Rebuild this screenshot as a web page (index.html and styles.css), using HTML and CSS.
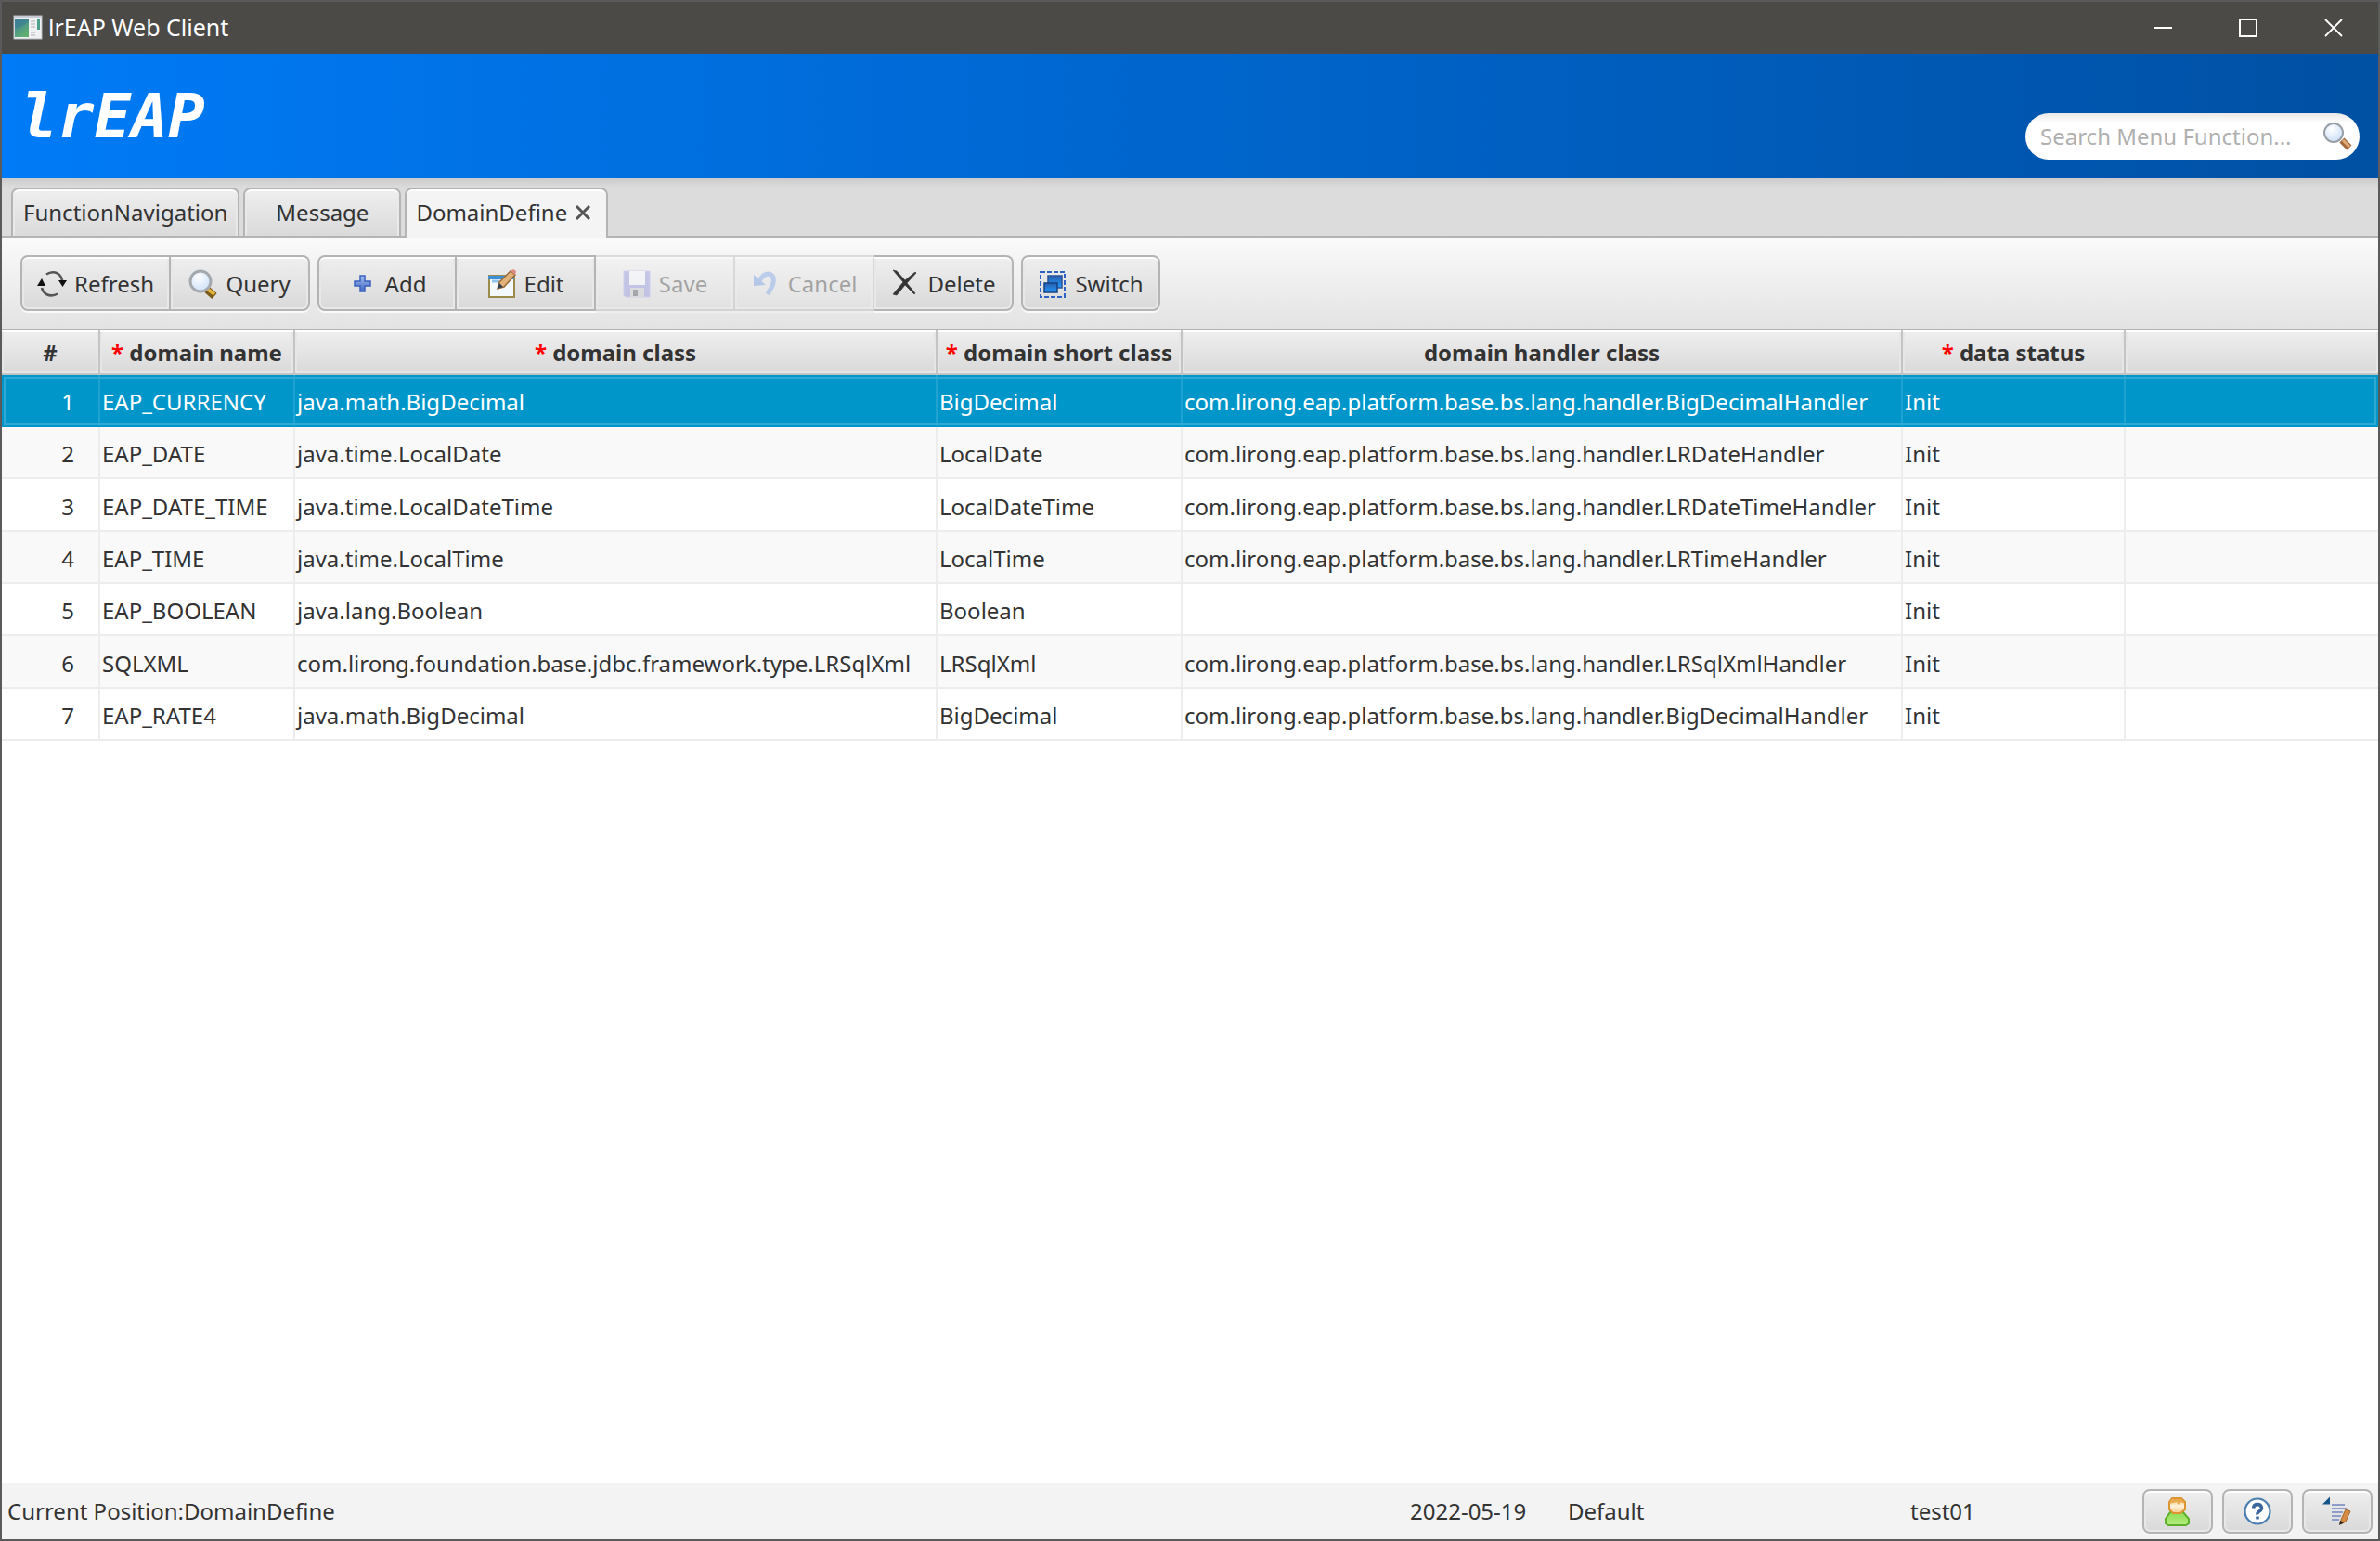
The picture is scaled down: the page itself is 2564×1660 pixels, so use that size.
FILE: index.html
```html
<!DOCTYPE html>
<html lang="en">
<head>
<meta charset="utf-8">
<title>lrEAP Web Client</title>
<link rel="stylesheet" href="styles.css">
</head>
<body>
<svg class="defs" width="0" height="0" aria-hidden="true">
  <defs>
    <radialGradient id="glass" cx="0.4" cy="0.3" r="0.8"><stop offset="0" stop-color="#ffffff"/><stop offset="1" stop-color="#c6dcf8"/></radialGradient>
    <linearGradient id="plus" x2="0" y2="1"><stop offset="0" stop-color="#a5c0f0"/><stop offset="1" stop-color="#3f66c4"/></linearGradient>
    <linearGradient id="photo" x2="0.6" y2="1"><stop offset="0" stop-color="#3f7f9f"/><stop offset="1" stop-color="#5fb070"/></linearGradient>
    <linearGradient id="face" x2="0" y2="1"><stop offset="0" stop-color="#f3b65b"/><stop offset="0.5" stop-color="#fff3dd"/><stop offset="1" stop-color="#fbc987"/></linearGradient>
    <linearGradient id="shirt" x2="0" y2="1"><stop offset="0" stop-color="#8fdc52"/><stop offset="1" stop-color="#b4ee80"/></linearGradient>
    <linearGradient id="pane" x2="0" y2="1"><stop offset="0" stop-color="#2a5dac"/><stop offset="1" stop-color="#1f9bff"/></linearGradient>
  </defs>
</svg>
<div class="window">
  <header class="titlebar">
    <svg class="app-icon" width="32" height="28" viewBox="0 0 32 28"><rect x="1" y="1" width="30" height="25" fill="#f0f1f2" stroke="#b9bcc2"/><path d="M1 2h30" stroke="#c9ccd6" stroke-width="2"/><rect x="2" y="5" width="15" height="19" fill="url(#photo)"/><path d="M2 15q7-1 15-8v-2H2z" fill="#3b7b93" opacity=".6"/><path d="M19 7h5M19 10h5M19 13h5M19 19h5M19 22h5" stroke="#c3c6c9" stroke-width="1.5"/><rect x="26" y="5" width="3" height="11" fill="#4f9f8d"/></svg>
    <h1 class="title">lrEAP Web Client</h1>
    <div class="window-buttons">
      <button aria-label="Minimize"><svg width="20" height="20" viewBox="0 0 20 20"><path d="M0 10h20" stroke="#fff" stroke-width="2"/></svg></button>
      <button aria-label="Maximize"><svg width="20" height="20" viewBox="0 0 20 20"><path d="M1 1h18v18H1z" fill="none" stroke="#fff" stroke-width="2"/></svg></button>
      <button aria-label="Close"><svg width="20" height="20" viewBox="0 0 20 20"><path d="M1 1l18 18M19 1L1 19" stroke="#fff" stroke-width="1.8"/></svg></button>
    </div>
  </header>

  <div class="banner">
    <div class="logo">lrEAP</div>
    <form class="search">
      <input type="text" aria-label="Search menu function" placeholder="Search Menu Function...">
      <svg width="32" height="32" viewBox="0 0 32 32"><path d="M20 21l8 8" stroke="#bdbdbd" stroke-width="5"/><path d="M21 20l8 8" stroke="#a5693c" stroke-width="7"/><path d="M22 20l7 7" stroke="#e0ab78" stroke-width="3"/><circle cx="12" cy="12" r="10" fill="url(#glass)" stroke="#9ba0a6" stroke-width="2"/></svg>
    </form>
  </div>

  <nav class="tabs">
    <button class="tab">FunctionNavigation</button>
    <button class="tab">Message</button>
    <button class="tab active">DomainDefine<svg width="18" height="18" viewBox="0 0 18 18"><path d="M2 2l14 14M16 2L2 16" stroke="#555" stroke-width="3"/></svg></button>
  </nav>

  <div class="toolbar">
    <div class="group">
      <button><svg width="32" height="32" viewBox="0 0 32 32"><path d="M10 5.500Q16 1.500 22 4.500Q26 7 27 12M22 26.500Q16 30 10 27Q6 24.500 5 20" fill="none" stroke="#555" stroke-width="2.600"/><path d="M23 12h9l-4.500 7z" fill="#111"/><path d="M0 18h9L5 10z" fill="#111"/></svg>Refresh</button>
      <button><svg width="32" height="32" viewBox="0 0 32 32"><path d="M20 22l8 7" stroke="#7a5a18" stroke-width="8"/><path d="M20 21l8 6" stroke="#e2b23b" stroke-width="4"/><circle cx="13" cy="13" r="11" fill="url(#glass)" stroke="#a4a9ae" stroke-width="3"/></svg>Query</button>
    </div>
    <div class="group">
      <button><svg width="32" height="32" viewBox="0 0 32 32"><path d="M13 7h5v6h6v5h-6v6h-5v-6H7v-5h6z" fill="url(#plus)" stroke="#3a62bd" stroke-width="1.500"/></svg>Add</button>
      <button><svg width="32" height="32" viewBox="0 0 32 32"><rect x="2" y="7" width="27" height="23" fill="#f3f9fd" stroke="#9c8a4b" stroke-width="2"/><path d="M1 7h28v4H1z" fill="#3d8fd6"/><path d="M5 13h8" stroke="#8fc3ea" stroke-width="3"/><path d="M11 21l2-7L25 2l5 4-12 13z" fill="#e2b27b" stroke="#9a6b3c" stroke-width="1.500"/><path d="M25 2l5 4 1-4-3-2z" fill="#e08a80"/><path d="M11 21l2-6 4 4z" fill="#2e4150"/></svg>Edit</button>
      <button disabled><svg width="32" height="32" viewBox="0 0 32 32"><path d="M2 2h28v28H4l-2-2z" fill="#8585d8" stroke="#a0a0ea" stroke-width="1"/><rect x="8" y="2" width="17" height="15" fill="#f7f9ff"/><rect x="9" y="20" width="15" height="10" fill="#bfc3c9"/><rect x="12" y="22" width="5" height="7" fill="#3d424a"/></svg>Save</button>
      <button disabled><svg width="32" height="32" viewBox="0 0 32 32"><path d="M9 13Q13 5 19 5Q27 7 23 18L18 27" fill="none" stroke="#6f9ae6" stroke-width="5"/><path d="M3 6v12l13-1z" fill="#5f8fe3"/></svg>Cancel</button>
      <button><svg width="32" height="32" viewBox="0 0 32 32"><path d="M2 1l4 1 9 10L26 3l1 1-10 11 9 11-1 1-10-10-9 11-4-1 11-13z" fill="#333" stroke="#444" stroke-width=".8"/></svg>Delete</button>
    </div>
    <div class="group">
      <button><svg width="32" height="32" viewBox="0 0 32 32"><rect x="3" y="3" width="26" height="27" fill="none" stroke="#2b62c4" stroke-width="2" stroke-dasharray="5 2"/><rect x="11" y="7" width="15" height="13" fill="url(#pane)" stroke="#2a5596" stroke-width="1.500"/><rect x="7" y="15" width="14" height="10" fill="url(#pane)" stroke="#17407f" stroke-width="1.500"/></svg>Switch</button>
    </div>
  </div>

  <main class="content">
    <table class="grid">
      <colgroup><col class="c-num"><col class="c-name"><col class="c-class"><col class="c-short"><col class="c-handler"><col class="c-status"><col></colgroup>
      <thead>
        <tr><th>#</th><th><i>*</i> domain name</th><th><i>*</i> domain class</th><th><i>*</i> domain short class</th><th>domain handler class</th><th><i>*</i> data status</th><th></th></tr>
      </thead>
      <tbody>
        <tr class="selected"><td>1</td><td>EAP_CURRENCY</td><td>java.math.BigDecimal</td><td>BigDecimal</td><td>com.lirong.eap.platform.base.bs.lang.handler.BigDecimalHandler</td><td>Init</td><td></td></tr>
        <tr><td>2</td><td>EAP_DATE</td><td>java.time.LocalDate</td><td>LocalDate</td><td>com.lirong.eap.platform.base.bs.lang.handler.LRDateHandler</td><td>Init</td><td></td></tr>
        <tr><td>3</td><td>EAP_DATE_TIME</td><td>java.time.LocalDateTime</td><td>LocalDateTime</td><td>com.lirong.eap.platform.base.bs.lang.handler.LRDateTimeHandler</td><td>Init</td><td></td></tr>
        <tr><td>4</td><td>EAP_TIME</td><td>java.time.LocalTime</td><td>LocalTime</td><td>com.lirong.eap.platform.base.bs.lang.handler.LRTimeHandler</td><td>Init</td><td></td></tr>
        <tr><td>5</td><td>EAP_BOOLEAN</td><td>java.lang.Boolean</td><td>Boolean</td><td></td><td>Init</td><td></td></tr>
        <tr><td>6</td><td>SQLXML</td><td>com.lirong.foundation.base.jdbc.framework.type.LRSqlXml</td><td>LRSqlXml</td><td>com.lirong.eap.platform.base.bs.lang.handler.LRSqlXmlHandler</td><td>Init</td><td></td></tr>
        <tr><td>7</td><td>EAP_RATE4</td><td>java.math.BigDecimal</td><td>BigDecimal</td><td>com.lirong.eap.platform.base.bs.lang.handler.BigDecimalHandler</td><td>Init</td><td></td></tr>
      </tbody>
    </table>
  </main>

  <footer class="statusbar">
    <span class="position">Current Position:DomainDefine</span>
    <span class="date">2022-05-19</span>
    <span class="org">Default</span>
    <span class="user">test01</span>
    <div class="status-buttons">
      <button aria-label="User"><svg width="32" height="32" viewBox="0 0 32 32"><path d="M3 29v-5l5-7h14l6 7v5l-3 2H6z" fill="url(#shirt)" stroke="#5cb02c" stroke-width="2"/><path d="M10 2h10l4 4v8l-5 4h-8l-4-4V6z" fill="url(#face)" stroke="#dd9432" stroke-width="2"/><path d="M7 8l4-5h9l4 5-5-2-2 3-2-3z" fill="#e8ab4e"/></svg></button>
      <button aria-label="Help"><svg width="32" height="32" viewBox="0 0 32 32"><circle cx="16" cy="16" r="13.500" fill="#fff" stroke="#4a7eb0" stroke-width="2.200"/><path d="M11.500 12.500Q12 8.500 16 8.500T20.500 12.500Q20.500 14.500 18 16T16 19.500" fill="none" stroke="#3a669c" stroke-width="3.400"/><rect x="14.300" y="21.500" width="3.400" height="3" fill="#3a669c"/></svg></button>
      <button aria-label="Edit notes"><svg width="32" height="32" viewBox="0 0 32 32"><path d="M0 8.500L8 .5v8z" fill="#145486"/><path d="M10 9h14M10 13h16M10 17h12M10 21h10M10 25h8" stroke="#8f9cc9" stroke-width="2"/><path d="M20 25l5-11 5 2-5 11-5 3z" fill="#d68c45" stroke="#a86529" stroke-width="1"/><path d="M18 31l1-5 4 2z" fill="#222"/></svg></button>
    </div>
  </footer>
</div>
</body>
</html>
```
FILE: styles.css
```css
* { box-sizing: border-box; }
html, body { height: 100%; margin: 0; }
body {
  font: 24px/32px "Noto Sans", "Open Sans", sans-serif;
  color: #333;
}
button {
  font: inherit;
  color: inherit;
  margin: 0;
  white-space: nowrap;
}
svg { display: block; flex: none; }
.defs { position: absolute; }

.window {
  display: flex;
  flex-direction: column;
  min-height: 100%;
  border: 2px solid #5a5a5a;
  background: #fff;
}

.titlebar {
  display: flex;
  align-items: center;
  height: 56px;
  padding: 0 2px 0 12px;
  gap: 6px;
  background: #4b4a47;
  color: #fff;
}
.title { flex: 1; margin: 0; padding-bottom: 2px; font-size: 25px; font-weight: 400; }
.window-buttons { display: flex; }
.window-buttons button {
  display: grid;
  place-items: center;
  width: 92px;
  height: 56px;
  padding: 0;
  border: 0;
  background: none;
}

.banner {
  display: flex;
  justify-content: space-between;
  height: 134px;
  padding: 0 20px;
  background: linear-gradient(to right, #007bf7, #0050a3);
}
.logo {
  color: #fff;
  font: italic bold 66px/136px "DejaVu Sans Mono", monospace;
}
.search {
  align-self: flex-end;
  display: flex;
  align-items: center;
  width: 360px;
  height: 50px;
  margin-bottom: 20px;
  padding: 0 8px 0 16px;
  border-radius: 25px;
  background: linear-gradient(#e8e8e8, #fff 10px);
}
.search input {
  flex: 1;
  min-width: 0;
  padding: 0;
  border: 0;
  outline: 0;
  background: none;
  font: inherit;
}
.search input::placeholder { color: #b0b0b0; opacity: 1; }

.tabs {
  display: flex;
  gap: 4px;
  height: 64px;
  padding: 10px 10px 0;
  background: linear-gradient(#cbcbcb, #dcdcdc 10px);
  box-shadow: inset 0 -2px #b4b4b4;
}
.tab {
  display: flex;
  align-items: center;
  justify-content: center;
  gap: 8px;
  min-width: 170px;
  padding: 0 11px;
  border: 2px solid #b4b4b4;
  border-radius: 8px 8px 0 0;
  background: linear-gradient(#efefef, #dadada);
  box-shadow: inset 0 2px #fdfdfd, inset 2px 0 #e9e9e9, inset -2px 0 #e9e9e9;
}
.tab.active {
  padding: 0 16px 2px 10px;
  border-bottom: 0;
  background: #f4f4f4;
  box-shadow: inset 0 2px #fff;
}

.toolbar {
  display: flex;
  align-items: center;
  gap: 8px;
  height: 100px;
  padding: 0 20px;
  border-bottom: 2px solid #b4b4b4;
  background: linear-gradient(#fafafa, #e3e3e3);
}
.group { display: flex; }
.group button {
  display: flex;
  align-items: center;
  justify-content: center;
  gap: 8px;
  min-width: 150px;
  height: 60px;
  padding: 2px 16px 0;
  border: 2px solid #b4b4b4;
  border-left-width: 0;
}
.group button:first-child { border-left-width: 2px; border-radius: 8px 0 0 8px; }
.group button:last-child { border-radius: 0 8px 8px 0; }
.group button:only-child { border-radius: 8px; }
.group button:disabled { opacity: 0.4; color: #333; }
.group button, .status-buttons button {
  background: linear-gradient(#efefef, #d9d9d9);
  box-shadow: inset 0 2px #fdfdfd, inset 0 0 0 2px #e8e8e8, 0 2px #fafafa;
}

.content { flex: 1; }
.grid {
  width: 100%;
  table-layout: fixed;
  border-collapse: separate;
  border-spacing: 0;
}
.c-num { width: 106px; }
.c-name { width: 210px; }
.c-class { width: 692px; }
.c-short { width: 264px; }
.c-handler { width: 776px; }
.c-status { width: 240px; }
.grid th {
  height: 48px;
  padding: 2px 0 0;
  border: solid #c4c4c4;
  border-width: 0 2px 2px 0;
  background: linear-gradient(#efefef, #d9d9d9);
  box-shadow: inset 0 2px #fdfdfd, inset 0 0 0 2px #e6e6e6;
  white-space: nowrap;
}
.grid th i { color: #f00; font-style: normal; }
.grid td {
  height: 56px;
  padding: 4px 2px 0;
  border: solid #ededed;
  border-width: 0 2px 2px 0;
  white-space: nowrap;
}
.grid th:last-child, .grid td:last-child { border-right: 0; }
.grid td:first-child { padding-right: 26px; text-align: right; }
.grid tbody tr:nth-child(3n) td { height: 57px; }
.grid tbody tr:nth-child(even) { background: #f9f9f9; }
.grid .selected {
  background: #0096c9;
  color: #fff;
  outline: 2px solid #2ea9d4;
  outline-offset: -4px;
}
.grid .selected td { border-color: #1fa2d0; border-bottom-color: #0096c9; }

.statusbar {
  display: grid;
  grid-template-columns: 1fr 170px 369px 250px auto;
  align-items: center;
  height: 60px;
  padding: 0 6px;
  background: #f3f3f3;
}
.status-buttons { display: flex; gap: 10px; }
.status-buttons button {
  display: grid;
  place-items: center;
  width: 76px;
  height: 48px;
  padding: 0;
  border: 2px solid #b4b4b4;
  border-radius: 8px;
}
```
